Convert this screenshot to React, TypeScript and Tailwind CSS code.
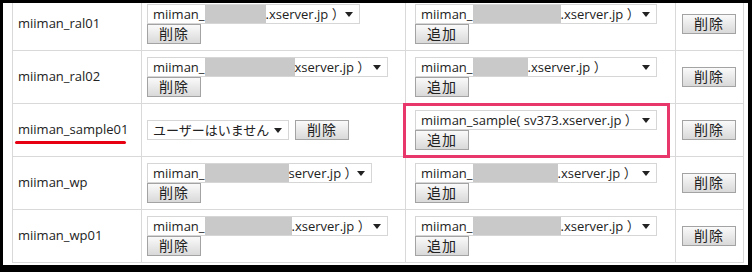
import React from 'react';

type Part = { text?: string; gray?: number };

type SelectBox = {
  width: number;
  parts: Part[];
};

type Row = {
  name: string;
  user: SelectBox;
  userInline?: boolean;
  server: SelectBox;
};

const rows: Row[] = [
  {
    name: 'miiman_ral01',
    user: { width: 213, parts: [{ text: 'miiman_' }, { gray: 61 }, { text: '.xserver.jp ）' }] },
    server: { width: 242, parts: [{ text: 'miiman_' }, { gray: 88 }, { text: '.xserver.jp ）' }] },
  },
  {
    name: 'miiman_ral02',
    user: { width: 241, parts: [{ text: 'miiman_' }, { gray: 90 }, { text: 'xserver.jp ）' }] },
    server: { width: 242, parts: [{ text: 'miiman_' }, { gray: 55 }, { text: '.xserver.jp ）' }] },
  },
  {
    name: 'miiman_sample01',
    userInline: true,
    user: { width: 142, parts: [{ text: 'ユーザーはいません' }] },
    server: { width: 242, parts: [{ text: 'miiman_sample( sv373.xserver.jp ）' }] },
  },
  {
    name: 'miiman_wp',
    user: { width: 225, parts: [{ text: 'miiman_' }, { gray: 84 }, { text: 'server.jp ）' }] },
    server: { width: 242, parts: [{ text: 'miiman_' }, { gray: 85 }, { text: '.xserver.jp ）' }] },
  },
  {
    name: 'miiman_wp01',
    user: { width: 241, parts: [{ text: 'miiman_' }, { gray: 87 }, { text: '.xserver.jp ）' }] },
    server: { width: 242, parts: [{ text: 'miiman_' }, { gray: 88 }, { text: '.xserver.jp ）' }] },
  },
];

// 下拉選單（外觀）
function FakeSelect({ box }: { box: SelectBox }) {
  return (
    <div
      className="relative flex h-[20px] items-stretch overflow-hidden border border-[#d6d6d6] bg-white pl-[5px] text-[13px] leading-[18px] text-[#222]"
      style={{ width: box.width }}
    >
      {box.parts.map((p, i) =>
        p.gray ? (
          <span key={i} className="shrink-0 bg-[#c9c9c9]" style={{ width: p.gray }} />
        ) : (
          <span key={i} className="shrink-0 whitespace-pre">
            {p.text}
          </span>
        )
      )}
      <span className="absolute right-[6px] top-[7px] h-0 w-0 border-x-[4px] border-t-[5px] border-x-transparent border-t-[#222]" />
    </div>
  );
}

function Btn({ label }: { label: string }) {
  return (
    <button
      type="button"
      className="flex h-[20px] w-[54px] items-center justify-center border border-[#a3a3a3] bg-gradient-to-b from-[#fafafa] to-[#d9d9d9] text-[14px] leading-none tracking-[1px] text-[#222]"
    >
      {label}
    </button>
  );
}

export default function App() {
  return (
    <div
      className="h-[272px] w-[752px] overflow-hidden bg-black pb-[7px] pl-[3px] pr-[4px] pt-[3px]"
      style={{ fontFamily: '"Open Sans", "Noto Sans CJK JP", sans-serif' }}
    >
      <div className="relative h-full w-full overflow-hidden bg-white pl-[9px] pr-[6px]">
        <table className="-mt-[6px] w-[731px] table-fixed border-collapse border border-[#d9d9d9]">
          <colgroup>
            <col className="w-[129px]" />
            <col className="w-[264px]" />
            <col className="w-[270px]" />
            <col className="w-[68px]" />
          </colgroup>
          <tbody>
            {rows.map((r) => (
              <tr key={r.name} className="h-[53px]">
                <td className="border border-[#d9d9d9] pl-[5px] align-middle text-[13px] text-[#222]">{r.name}</td>
                <td className="border border-[#d9d9d9] pl-[5px] align-middle">
                  {r.userInline ? (
                    <div className="flex items-center gap-[6px]">
                      <FakeSelect box={r.user} />
                      <Btn label="削除" />
                    </div>
                  ) : (
                    <div className="flex flex-col">
                      <FakeSelect box={r.user} />
                      <Btn label="削除" />
                    </div>
                  )}
                </td>
                <td className="border border-[#d9d9d9] pl-[9px] align-middle">
                  <div className="flex flex-col">
                    <FakeSelect box={r.server} />
                    <Btn label="追加" />
                  </div>
                </td>
                <td className="border border-[#d9d9d9] pl-[6px] align-middle">
                  <Btn label="削除" />
                </td>
              </tr>
            ))}
          </tbody>
        </table>

        {/* 標記 */}
        <div className="absolute left-[400px] top-[100px] h-[55px] w-[267px] border-[3px] border-[#e8386b]" />
        <div className="absolute left-[12px] top-[138px] h-[3px] w-[111px] rounded-full bg-[#e60012]" />
      </div>
    </div>
  );
}
